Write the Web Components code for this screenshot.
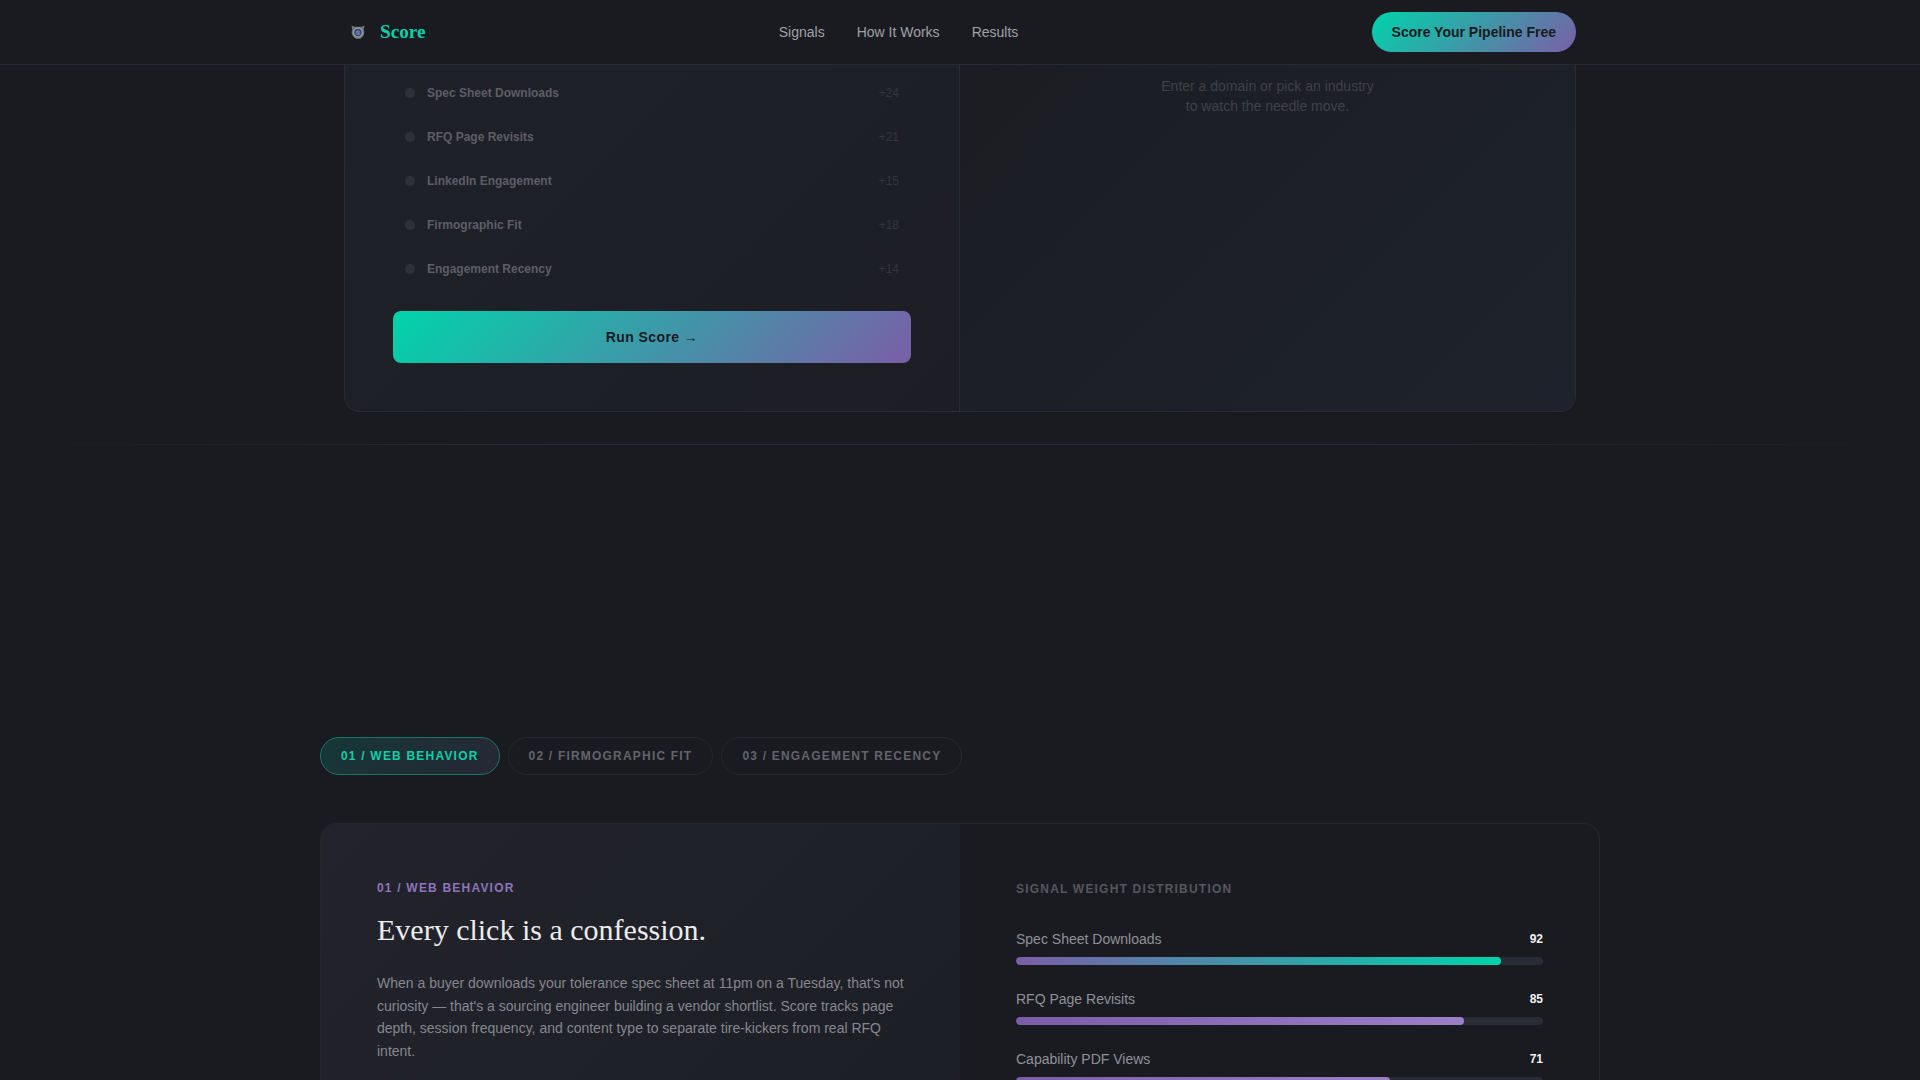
<!DOCTYPE html>
<html lang="en"><head><meta charset="utf-8"><title>Score</title>
<style>
html,body{margin:0;height:1080px;overflow:hidden;background:#1a1b20;color:#f0f0f0;font-family:"Liberation Sans",Arial,sans-serif}
body{display:flex;flex-direction:column}
</style></head><body>
<app-header></app-header>
<score-demo>
  <signal-row label="Spec Sheet Downloads" value="+24"></signal-row>
  <signal-row label="RFQ Page Revisits" value="+21"></signal-row>
  <signal-row label="LinkedIn Engagement" value="+15"></signal-row>
  <signal-row label="Firmographic Fit" value="+18"></signal-row>
  <signal-row label="Engagement Recency" value="+14"></signal-row>
</score-demo>
<fade-rule></fade-rule>
<signals-section>
  <tab-pill active>01 / WEB BEHAVIOR</tab-pill>
  <tab-pill>02 / FIRMOGRAPHIC FIT</tab-pill>
  <tab-pill>03 / ENGAGEMENT RECENCY</tab-pill>
  <weight-bar slot="bars" label="Spec Sheet Downloads" value="92" fill="linear-gradient(90deg,#7b5ea7,#00d4aa)"></weight-bar>
  <weight-bar slot="bars" label="RFQ Page Revisits" value="85"></weight-bar>
  <weight-bar slot="bars" label="Capability PDF Views" value="71"></weight-bar>
</signals-section>
<script>
function def(name, html, setup){
  customElements.define(name, class extends HTMLElement{
    connectedCallback(){
      if(this.shadowRoot) return;
      const r=this.attachShadow({mode:'open'});
      r.innerHTML=html;
      if(setup) setup(r,this);
    }
  });
}
def('app-header',`<style>
:host{display:block;flex:none;height:65px;box-sizing:border-box;background:#1a1b20;border-bottom:1px solid #272a31}
.in{width:1232px;height:64px;margin:0 auto;display:flex;align-items:center;justify-content:space-between}
.logo{display:flex;align-items:center;gap:13px;padding-left:5px;font:700 19.2px "Liberation Serif",serif;color:#10cfa8}
nav{display:flex;gap:32px}
nav a{font-size:14px;color:#a0a0a8;text-decoration:none}
.cta{height:40px;box-sizing:border-box;padding:0 20px;display:flex;align-items:center;border-radius:20px;font-size:14px;font-weight:700;color:#1a1b20;background:linear-gradient(135deg,#00d4aa,#7b5ea7)}
svg{display:block}
</style><div class="in"><div class="logo"><svg width="18" height="18" viewBox="0 0 18 18"><path d="M2.5 2.5l3 1.2h7l3-1.2-.8 4.5c.8 1.200.8 3.500 0 5C13.500 14.800 11.500 16 9 16s-4.500-1.200-5.700-4c-.8-1.500-.8-3.800 0-5z" fill="#6f7680"/><circle cx="9" cy="9.500" r="5" fill="#9aa1ab"/><circle cx="9" cy="9.500" r="3.700" fill="#33405a"/><path d="M9 6.500l2.300 2V12H6.700V8.500z" fill="#5577aa"/></svg>Score</div>
<nav><a>Signals</a><a>How It Works</a><a>Results</a></nav><div class="cta">Score Your Pipeline Free</div></div>`);
def('score-demo',`<style>
:host{display:grid;flex:none;grid-template-columns:1fr 1fr;width:1232px;height:347px;margin:0 auto;box-sizing:border-box;border:1px solid #2a2c33;border-top:0;border-radius:0 0 16px 16px;overflow:hidden;background:linear-gradient(135deg,#1f2129,#1b1c21 110%)}
.l{padding:6px 48px 0;border-right:1px solid #2a2c33;display:flex;flex-direction:column}
.rows{display:flex;flex-direction:column}
.run{margin-top:20px;height:52px;border-radius:8px;display:flex;align-items:center;justify-content:center;font-size:14px;font-weight:700;letter-spacing:.4px;color:#1a1b20;background:linear-gradient(135deg,#00d4aa,#7b5ea7)}
.r{padding:11px 0 0;text-align:center;font-size:14px;line-height:20px;color:#3f4149;background:linear-gradient(135deg,#1b1d22,#1e222c)}
</style><div class="l"><div class="rows"><slot></slot></div><div class="run">Run Score →</div></div>
<div class="r">Enter a domain or pick an industry<br>to watch the needle move.</div>`);
def('signal-row',`<style>
:host{display:flex;align-items:center;height:44px;padding:0 12px;gap:12px;font-size:12px}
i{width:10px;height:10px;border-radius:50%;background:#2f3139}
b{flex:1;color:#5c5e66}
span{color:#33353c}
</style><i></i><b></b><span></span>`,(r,h)=>{r.querySelector('b').textContent=h.getAttribute('label');r.querySelector('span').textContent=h.getAttribute('value')});
def('fade-rule',`<style>:host{display:block;flex:none;height:1px;margin-top:32px;background:linear-gradient(90deg,transparent,#2a2c33 30%,#2a2c33 70%,transparent)}</style>`);
def('signals-section',`<style>
:host{display:block;flex:none;width:1280px;margin:292px auto 0}
.tabs{display:flex;gap:8px;margin-bottom:48px}
.panel{display:grid;grid-template-columns:1fr 1fr;height:400px;box-sizing:border-box;border:1px solid #24262c;border-radius:16px;overflow:hidden}
.a{padding:56px 56px 0;background:linear-gradient(135deg,#22232c,#1c1e24)}
.b{padding:56px 56px 0}
.k{font-size:12px;font-weight:700;letter-spacing:1.2px;line-height:16px;color:#8f74bc}
h2{margin:16px 0 24px;font:400 30px/36px "Liberation Serif",serif;color:#ececec}
p{margin:0;font-size:14px;line-height:22.5px;color:#85878f}
.s{margin-top:1px;font-size:12px;font-weight:700;letter-spacing:1.2px;line-height:16px;color:#55575f;margin-bottom:34px}
.bars{display:flex;flex-direction:column;gap:26px}
</style><div class="tabs"><slot></slot></div>
<div class="panel"><div class="a"><div class="k">01 / WEB BEHAVIOR</div><h2>Every click is a confession.</h2>
<p>When a buyer downloads your tolerance spec sheet at 11pm on a Tuesday, that's not curiosity — that's a sourcing engineer building a vendor shortlist. Score tracks page depth, session frequency, and content type to separate tire-kickers from real RFQ intent.</p></div>
<div class="b"><div class="s">SIGNAL WEIGHT DISTRIBUTION</div><div class="bars"><slot name="bars"></slot></div></div></div>`);
def('tab-pill',`<style>
:host{display:flex;align-items:center;height:38px;box-sizing:border-box;padding:0 20px;border:1px solid #25272d;border-radius:19px;font-size:12px;font-weight:700;letter-spacing:1.2px;color:#62646c}
:host([active]){color:#10cfa8;border-color:#1b7566;background:linear-gradient(135deg,#153837,#272735)}
</style><slot></slot>`);
def('weight-bar',`<style>
:host{display:block}
.t{display:flex;justify-content:space-between;align-items:center;font-size:14px;height:16px;color:#8f9199;margin-bottom:10px}
b{font-size:12px;color:#f0f0f0}
.tr{height:8px;border-radius:4px;background:#2a2c35;overflow:hidden}
.f{height:8px;border-radius:4px;background:linear-gradient(90deg,#7b5ea7,#9b7fc7)}
</style><div class="t"><span></span><b></b></div><div class="tr"><div class="f"></div></div>`,(r,h)=>{
 r.querySelector('span').textContent=h.getAttribute('label');
 const v=h.getAttribute('value');r.querySelector('b').textContent=v;
 const f=r.querySelector('.f');f.style.width=v+'%';if(h.getAttribute('fill'))f.style.background=h.getAttribute('fill');
});
</script>
</body></html>
